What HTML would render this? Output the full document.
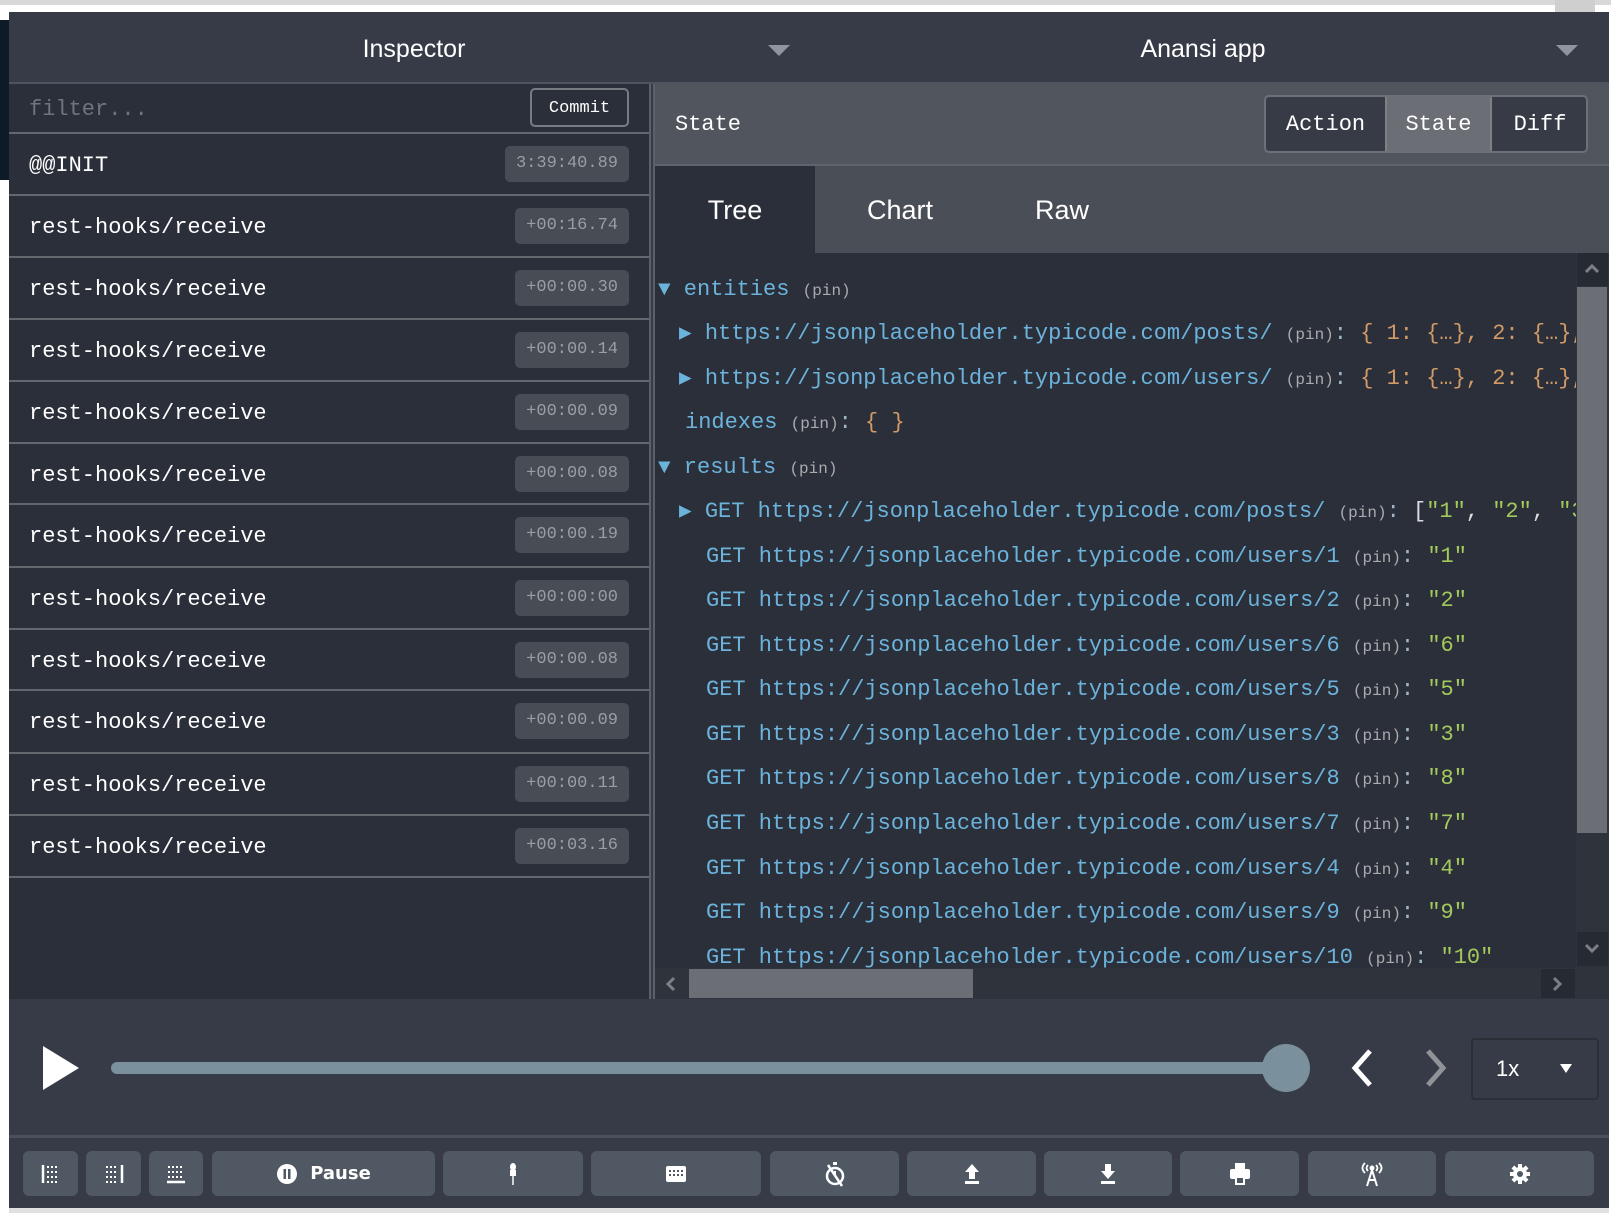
<!DOCTYPE html>
<html><head><meta charset="utf-8"><style>
*{margin:0;padding:0;box-sizing:border-box}
body{width:1611px;height:1213px;background:#fff;position:relative;overflow:hidden;font-family:"Liberation Mono",monospace}
.a{position:absolute}
.sans{font-family:"Liberation Sans",sans-serif}
.row{position:absolute;left:9px;width:640px;height:60px;background:#2b2f3a;color:#fff;font-size:22px}
.row .t{position:absolute;left:20px;top:19px}
.badge{position:absolute;right:20px;top:12px;height:36px;background:#474c55;border-radius:5px;color:#9a9ea5;font-size:17px;line-height:36px;padding:0 11px}
.ln{position:absolute;height:30px;line-height:30px;font-size:22px;white-space:nowrap;color:#6cb3dc}
.p{font-size:16px;color:#a9abad}
.c{color:#9fb6c6}
.o{color:#d19a66}
.g{color:#a3c95c}
.ar{font-size:21px;color:#6cb3dc}
.btn{position:absolute;top:1151px;height:45px;background:#4f5863;border-radius:6px;display:flex;align-items:center;justify-content:center;color:#fff}
</style></head><body>
<div class="a" style="left:0;top:0;width:1611px;height:5px;background:#d8d8d8"></div>
<div class="a" style="left:0;top:20px;width:9px;height:160px;background:#0e1a28"></div>
<div class="a" style="left:1555px;top:0;width:40px;height:12px;background:#cfcfcf"></div>
<div class="a" style="left:9px;top:12px;width:1600px;height:1198px;background:#363b47"></div>
<div class="a sans" style="left:26px;top:12px;width:776px;height:72px;color:#fff;font-size:25px;line-height:74px;text-align:center">Inspector</div>
<div class="a" style="left:768px;top:45px;width:0;height:0;border-left:11px solid transparent;border-right:11px solid transparent;border-top:11px solid #9094a0"></div>
<div class="a sans" style="left:800px;top:12px;width:806px;height:72px;color:#fff;font-size:25px;line-height:74px;text-align:center">Anansi app</div>
<div class="a" style="left:1556px;top:45px;width:0;height:0;border-left:11px solid transparent;border-right:11px solid transparent;border-top:11px solid #9094a0"></div>
<div class="a" style="left:9px;top:82px;width:1600px;height:2px;background:#4e535d"></div>
<div class="a" style="left:9px;top:84px;width:640px;height:915px;background:#2b2f3a"></div>
<div class="a" style="left:649px;top:84px;width:2px;height:915px;background:#5c6068"></div>
<div class="a" style="left:653px;top:84px;width:2px;height:915px;background:#5c6068"></div>
<div class="a" style="left:29px;top:97px;color:#70747c;font-size:22px">filter...</div>
<div class="a" style="left:530px;top:88px;width:99px;height:39px;border:2px solid #777b82;border-radius:5px;color:#fff;font-size:17px;line-height:37px;text-align:center;background:#2b2f3a">Commit</div>
<div class="a" style="left:9px;top:132px;width:640px;height:2px;background:#62666d"></div>

<div class="row" style="top:134px"><span class="t">@@INIT</span><span class="badge">3:39:40.89</span></div>
<div class="row" style="top:196px"><span class="t">rest-hooks/receive</span><span class="badge">+00:16.74</span></div>
<div class="row" style="top:258px"><span class="t">rest-hooks/receive</span><span class="badge">+00:00.30</span></div>
<div class="row" style="top:320px"><span class="t">rest-hooks/receive</span><span class="badge">+00:00.14</span></div>
<div class="row" style="top:382px"><span class="t">rest-hooks/receive</span><span class="badge">+00:00.09</span></div>
<div class="row" style="top:444px"><span class="t">rest-hooks/receive</span><span class="badge">+00:00.08</span></div>
<div class="row" style="top:505px"><span class="t">rest-hooks/receive</span><span class="badge">+00:00.19</span></div>
<div class="row" style="top:568px"><span class="t">rest-hooks/receive</span><span class="badge">+00:00:00</span></div>
<div class="row" style="top:630px"><span class="t">rest-hooks/receive</span><span class="badge">+00:00.08</span></div>
<div class="row" style="top:691px"><span class="t">rest-hooks/receive</span><span class="badge">+00:00.09</span></div>
<div class="row" style="top:754px"><span class="t">rest-hooks/receive</span><span class="badge">+00:00.11</span></div>
<div class="row" style="top:816px"><span class="t">rest-hooks/receive</span><span class="badge">+00:03.16</span></div>
<div class="a" style="left:9px;top:194px;width:640px;height:2px;background:#62666d"></div>
<div class="a" style="left:9px;top:256px;width:640px;height:2px;background:#62666d"></div>
<div class="a" style="left:9px;top:318px;width:640px;height:2px;background:#62666d"></div>
<div class="a" style="left:9px;top:380px;width:640px;height:2px;background:#62666d"></div>
<div class="a" style="left:9px;top:442px;width:640px;height:2px;background:#62666d"></div>
<div class="a" style="left:9px;top:503px;width:640px;height:2px;background:#62666d"></div>
<div class="a" style="left:9px;top:566px;width:640px;height:2px;background:#62666d"></div>
<div class="a" style="left:9px;top:628px;width:640px;height:2px;background:#62666d"></div>
<div class="a" style="left:9px;top:689px;width:640px;height:2px;background:#62666d"></div>
<div class="a" style="left:9px;top:752px;width:640px;height:2px;background:#62666d"></div>
<div class="a" style="left:9px;top:814px;width:640px;height:2px;background:#62666d"></div>
<div class="a" style="left:9px;top:876px;width:640px;height:2px;background:#62666d"></div>

<div class="a" style="left:655px;top:84px;width:954px;height:81px;background:#50555e"></div>
<div class="a" style="left:675px;top:112px;color:#fff;font-size:22px">State</div>
<div class="a" style="left:1264px;top:95px;width:324px;height:58px;border:2px solid #6c7077;border-radius:5px;background:#363b45;overflow:hidden">
 <div class="a" style="left:0;top:0;width:119px;height:54px;color:#fff;font-size:22px;line-height:56px;text-align:center">Action</div>
 <div class="a" style="left:119px;top:0;width:107px;height:54px;background:#6b6e75;border-left:2px solid #7d8187;border-right:2px solid #7d8187;color:#fff;font-size:22px;line-height:56px;text-align:center">State</div>
 <div class="a" style="left:226px;top:0;width:96px;height:54px;color:#fff;font-size:22px;line-height:56px;text-align:center">Diff</div>
</div>
<div class="a" style="left:655px;top:164px;width:954px;height:2px;background:#5f636b"></div>
<div class="a" style="left:655px;top:166px;width:954px;height:87px;background:#4a4e57"></div>
<div class="a sans" style="left:655px;top:166px;width:160px;height:87px;background:#2b2f3a;color:#fff;font-size:27px;line-height:88px;text-align:center">Tree</div>
<div class="a sans" style="left:820px;top:166px;width:160px;height:87px;color:#fff;font-size:27px;line-height:88px;text-align:center">Chart</div>
<div class="a sans" style="left:982px;top:166px;width:160px;height:87px;color:#fff;font-size:27px;line-height:88px;text-align:center">Raw</div>
<div class="a" style="left:655px;top:253px;width:921px;height:715px;background:#2b2f3a;overflow:hidden">
 <div class="ln" style="left:3px;top:22px"><span class="ar">▼</span> entities <span class="p">(pin)</span></div>
 <div class="ln" style="left:24px;top:66px"><span class="ar">▶</span> https://jsonplaceholder.typicode.com/posts/ <span class="p">(pin)</span><span class="c">:</span> <span class="o">{ 1: {…}, 2: {…},</span></div>
 <div class="ln" style="left:24px;top:111px"><span class="ar">▶</span> https://jsonplaceholder.typicode.com/users/ <span class="p">(pin)</span><span class="c">:</span> <span class="o">{ 1: {…}, 2: {…},</span></div>
 <div class="ln" style="left:30px;top:155px">indexes <span class="p">(pin)</span><span class="c">:</span> <span class="o">{ }</span></div>
 <div class="ln" style="left:3px;top:200px"><span class="ar">▼</span> results <span class="p">(pin)</span></div>
 <div class="ln" style="left:24px;top:244px"><span class="ar">▶</span> GET https://jsonplaceholder.typicode.com/posts/ <span class="p">(pin)</span><span class="c">:</span> <span style="color:#dedede">[</span><span class="g">"1"</span><span style="color:#dedede">,</span> <span class="g">"2"</span><span style="color:#dedede">,</span> <span class="g">"3"</span></div>
 <div class="ln" style="left:51px;top:289px">GET https://jsonplaceholder.typicode.com/users/1 <span class="p">(pin)</span><span class="c">:</span> <span class="g">"1"</span></div>
 <div class="ln" style="left:51px;top:333px">GET https://jsonplaceholder.typicode.com/users/2 <span class="p">(pin)</span><span class="c">:</span> <span class="g">"2"</span></div>
 <div class="ln" style="left:51px;top:378px">GET https://jsonplaceholder.typicode.com/users/6 <span class="p">(pin)</span><span class="c">:</span> <span class="g">"6"</span></div>
 <div class="ln" style="left:51px;top:422px">GET https://jsonplaceholder.typicode.com/users/5 <span class="p">(pin)</span><span class="c">:</span> <span class="g">"5"</span></div>
 <div class="ln" style="left:51px;top:467px">GET https://jsonplaceholder.typicode.com/users/3 <span class="p">(pin)</span><span class="c">:</span> <span class="g">"3"</span></div>
 <div class="ln" style="left:51px;top:511px">GET https://jsonplaceholder.typicode.com/users/8 <span class="p">(pin)</span><span class="c">:</span> <span class="g">"8"</span></div>
 <div class="ln" style="left:51px;top:556px">GET https://jsonplaceholder.typicode.com/users/7 <span class="p">(pin)</span><span class="c">:</span> <span class="g">"7"</span></div>
 <div class="ln" style="left:51px;top:601px">GET https://jsonplaceholder.typicode.com/users/4 <span class="p">(pin)</span><span class="c">:</span> <span class="g">"4"</span></div>
 <div class="ln" style="left:51px;top:645px">GET https://jsonplaceholder.typicode.com/users/9 <span class="p">(pin)</span><span class="c">:</span> <span class="g">"9"</span></div>
 <div class="ln" style="left:51px;top:690px">GET https://jsonplaceholder.typicode.com/users/10 <span class="p">(pin)</span><span class="c">:</span> <span class="g">"10"</span></div>
</div>
<div class="a" style="left:1576px;top:253px;width:33px;height:715px;background:#2f333c"></div>
<div class="a" style="left:1577px;top:253px;width:31px;height:33px;background:#262a32"></div>
<svg class="a" style="left:1583px;top:261px" width="18" height="16"><path d="M3 11 L9 5 L15 11" stroke="#7c8086" stroke-width="3" fill="none"/></svg>
<div class="a" style="left:1577px;top:287px;width:30px;height:546px;background:#6b6e74"></div>
<div class="a" style="left:1577px;top:932px;width:31px;height:34px;background:#262a32"></div>
<svg class="a" style="left:1583px;top:940px" width="18" height="16"><path d="M3 5 L9 11 L15 5" stroke="#7c8086" stroke-width="3" fill="none"/></svg>
<div class="a" style="left:655px;top:968px;width:921px;height:31px;background:#2f333c"></div>
<svg class="a" style="left:663px;top:975px" width="16" height="18"><path d="M11 3 L5 9 L11 15" stroke="#7c8086" stroke-width="3" fill="none"/></svg>
<div class="a" style="left:689px;top:969px;width:284px;height:29px;background:#6b6e74"></div>
<div class="a" style="left:1541px;top:969px;width:34px;height:29px;background:#262a32"></div>
<svg class="a" style="left:1549px;top:975px" width="16" height="18"><path d="M5 3 L11 9 L5 15" stroke="#7c8086" stroke-width="3" fill="none"/></svg>
<div class="a" style="left:1576px;top:968px;width:33px;height:31px;background:#2f333c"></div>
<svg class="a" style="left:43px;top:1046px" width="38" height="44"><path d="M0 0 L36 22 L0 44 Z" fill="#fff"/></svg>
<div class="a" style="left:111px;top:1062px;width:1174px;height:12px;border-radius:6px;background:#7a909c"></div>
<div class="a" style="left:1262px;top:1044px;width:48px;height:48px;border-radius:50%;background:#7a909c"></div>
<svg class="a" style="left:1348px;top:1048px" width="28" height="40"><path d="M22 3 L7 20 L22 37" stroke="#fff" stroke-width="5" fill="none"/></svg>
<svg class="a" style="left:1422px;top:1048px" width="28" height="40"><path d="M6 3 L21 20 L6 37" stroke="#909398" stroke-width="5" fill="none"/></svg>
<div class="a" style="left:1471px;top:1038px;width:128px;height:62px;border:2px solid #2a2e37;border-radius:4px;background:#363b47"></div>
<div class="a sans" style="left:1496px;top:1056px;color:#fff;font-size:22px">1x</div>
<div class="a" style="left:1560px;top:1064px;width:0;height:0;border-left:6px solid transparent;border-right:6px solid transparent;border-top:9px solid #fff"></div>
<div class="a" style="left:9px;top:1135px;width:1600px;height:3px;background:#4b515c"></div>
<div class="btn" style="left:23px;width:55px"><svg width="20" height="20"><path d="M2 1V19" stroke="#fff" stroke-width="2.5"/><g fill="#fff"><rect x="6" y="2" width="2" height="2"/><rect x="10" y="2" width="2" height="2"/><rect x="14" y="2" width="2" height="2"/><rect x="6" y="7" width="2" height="2"/><rect x="10" y="7" width="2" height="2"/><rect x="14" y="7" width="2" height="2"/><rect x="6" y="12" width="2" height="2"/><rect x="10" y="12" width="2" height="2"/><rect x="14" y="12" width="2" height="2"/><rect x="6" y="17" width="2" height="2"/><rect x="10" y="17" width="2" height="2"/><rect x="14" y="17" width="2" height="2"/></g></svg></div>
<div class="btn" style="left:86px;width:55px"><svg width="20" height="20"><path d="M18 1V19" stroke="#fff" stroke-width="2.5"/><g fill="#fff"><rect x="2" y="2" width="2" height="2"/><rect x="6" y="2" width="2" height="2"/><rect x="10" y="2" width="2" height="2"/><rect x="2" y="7" width="2" height="2"/><rect x="6" y="7" width="2" height="2"/><rect x="10" y="7" width="2" height="2"/><rect x="2" y="12" width="2" height="2"/><rect x="6" y="12" width="2" height="2"/><rect x="10" y="12" width="2" height="2"/><rect x="2" y="17" width="2" height="2"/><rect x="6" y="17" width="2" height="2"/><rect x="10" y="17" width="2" height="2"/></g></svg></div>
<div class="btn" style="left:149px;width:54px"><svg width="20" height="20"><path d="M1 18H19" stroke="#fff" stroke-width="2.5"/><g fill="#fff"><rect x="2" y="2" width="2" height="2"/><rect x="6" y="2" width="2" height="2"/><rect x="10" y="2" width="2" height="2"/><rect x="14" y="2" width="2" height="2"/><rect x="2" y="7" width="2" height="2"/><rect x="6" y="7" width="2" height="2"/><rect x="10" y="7" width="2" height="2"/><rect x="14" y="7" width="2" height="2"/><rect x="2" y="12" width="2" height="2"/><rect x="6" y="12" width="2" height="2"/><rect x="10" y="12" width="2" height="2"/><rect x="14" y="12" width="2" height="2"/></g></svg></div>
<div class="btn" style="left:212px;width:223px;font-family:'DejaVu Sans',sans-serif;font-weight:bold;font-size:18px"><svg width="22" height="22" style="margin-right:12px"><circle cx="11" cy="11" r="10" fill="#fff"/><rect x="7.5" y="6" width="2.5" height="10" fill="#4f5863"/><rect x="12" y="6" width="2.5" height="10" fill="#4f5863"/></svg>Pause</div>
<div class="btn" style="left:443px;width:140px"><svg width="14" height="24"><ellipse cx="7" cy="5" rx="3" ry="4" fill="#fff"/><rect x="4" y="8" width="6" height="6" fill="#fff"/><path d="M7 14V23" stroke="#fff" stroke-width="1.5"/></svg></div>
<div class="btn" style="left:591px;width:170px"><svg width="20" height="16"><rect x="0" y="0" width="20" height="16" rx="2" fill="#fff"/><g fill="#4f5863"><rect x="3" y="4" width="2" height="2"/><rect x="7" y="4" width="2" height="2"/><rect x="11" y="4" width="2" height="2"/><rect x="15" y="4" width="2" height="2"/><rect x="3" y="8" width="2" height="2"/><rect x="7" y="8" width="2" height="2"/><rect x="11" y="8" width="2" height="2"/><rect x="15" y="8" width="2" height="2"/></g></svg></div>
<div class="btn" style="left:770px;width:129px"><svg width="22" height="26"><rect x="9" y="1" width="4" height="3" fill="#fff"/><circle cx="11" cy="15" r="8" stroke="#fff" stroke-width="2.5" fill="none"/><path d="M11 15V10" stroke="#fff" stroke-width="2"/><path d="M4 4L18 25" stroke="#fff" stroke-width="2.5"/></svg></div>
<div class="btn" style="left:907px;width:129px"><svg width="18" height="22"><path d="M9 1L2 9H6V16H12V9H16Z" fill="#fff"/><rect x="2" y="18" width="14" height="3" fill="#fff"/></svg></div>
<div class="btn" style="left:1044px;width:128px"><svg width="18" height="22"><path d="M9 16L2 8H6V1H12V8H16Z" fill="#fff"/><rect x="2" y="18" width="14" height="3" fill="#fff"/></svg></div>
<div class="btn" style="left:1180px;width:119px"><svg width="22" height="22"><rect x="6" y="0" width="10" height="6" fill="#fff"/><rect x="1" y="6" width="20" height="10" rx="2" fill="#fff"/><rect x="6" y="13" width="10" height="9" fill="#fff"/><rect x="8" y="15" width="6" height="5" fill="#4f5863"/></svg></div>
<div class="btn" style="left:1308px;width:128px"><svg width="26" height="26"><path d="M6 2Q1 7 6 12M20 2Q25 7 20 12M9 4Q6 7 9 10M17 4Q20 7 17 10" stroke="#fff" stroke-width="1.8" fill="none"/><circle cx="13" cy="7" r="2.5" fill="#fff"/><path d="M13 9L8 25M13 9L18 25M10 19H16" stroke="#fff" stroke-width="2" fill="none"/></svg></div>
<div class="btn" style="left:1445px;width:149px"><svg width="22" height="22" viewBox="0 0 22 22"><g fill="#fff"><circle cx="11" cy="11" r="7"/><rect x="9" y="1" width="4" height="20"/><rect x="1" y="9" width="20" height="4"/><rect x="9" y="1" width="4" height="20" transform="rotate(45 11 11)"/><rect x="9" y="1" width="4" height="20" transform="rotate(-45 11 11)"/></g><circle cx="11" cy="11" r="3" fill="#4f5863"/></svg></div>
<div class="a" style="left:9px;top:1208px;width:1600px;height:5px;background:#e0e0e0"></div>
</body></html>
